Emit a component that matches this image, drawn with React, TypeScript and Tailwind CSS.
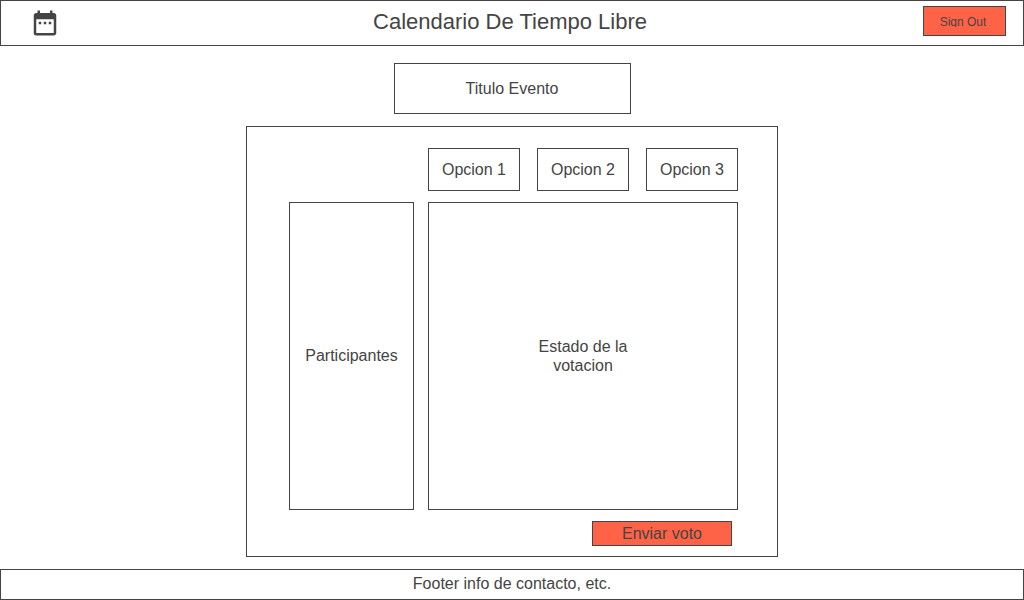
import { MdDateRange } from "react-icons/md";

const options = ["Opcion 1", "Opcion 2", "Opcion 3"];

function Header() {
  return (
    <header className="grid h-[46px] grid-cols-[1fr_auto_1fr] items-start border border-[#444] pr-[17px] pl-[13px]">
      <a href="#" aria-label="Inicio" className="mt-[7px] ml-4 justify-self-start">
        <MdDateRange size={30} />
      </a>
      <h1 className="pt-[5px] text-[22px] leading-8">Calendario De Tiempo Libre</h1>
      <button
        type="button"
        className="mt-[5px] flex h-[30px] w-[83px] items-center justify-center justify-self-end border border-[#444] bg-[#ff6347] pr-[3px] text-xs"
      >
        <span className="h-3 overflow-hidden leading-[14px]">Sign Out</span>
      </button>
    </header>
  );
}

function VotingPanel() {
  return (
    <section className="mt-3 grid w-full max-w-[532px] grow grid-cols-[125fr_310fr] grid-rows-[auto_1fr_auto] gap-x-[14px] gap-y-[11px] border border-[#444] pt-[21px] pr-[39px] pb-[10px] pl-[42px]">
      <div className="col-start-2 grid grid-cols-3 gap-[17px]">
        {options.map((option) => (
          <button key={option} type="button" className="h-[43px] border border-[#444]">
            {option}
          </button>
        ))}
      </div>
      <div className="col-start-1 flex items-center justify-center border border-[#444]">
        Participantes
      </div>
      <div className="flex items-center justify-center border border-[#444]">
        <p className="w-28 text-center leading-[19px]">Estado de la votacion</p>
      </div>
      <button
        type="button"
        className="col-start-2 mr-[6px] h-[25px] w-[140px] justify-self-end border border-[#444] bg-[#ff6347] leading-5"
      >
        Enviar voto
      </button>
    </section>
  );
}

export default function App() {
  return (
    <div className="flex min-h-screen flex-col bg-white font-['Liberation_Sans',Arial,sans-serif] text-base text-[#444]">
      <Header />
      <main className="flex grow flex-col items-center pt-[17px] pb-3">
        <h2 className="flex h-[51px] w-[237px] items-center justify-center border border-[#444]">
          Titulo Evento
        </h2>
        <VotingPanel />
      </main>
      <footer className="flex h-[31px] items-center justify-center border border-[#444] pb-[2px]">
        Footer info de contacto, etc.
      </footer>
    </div>
  );
}
